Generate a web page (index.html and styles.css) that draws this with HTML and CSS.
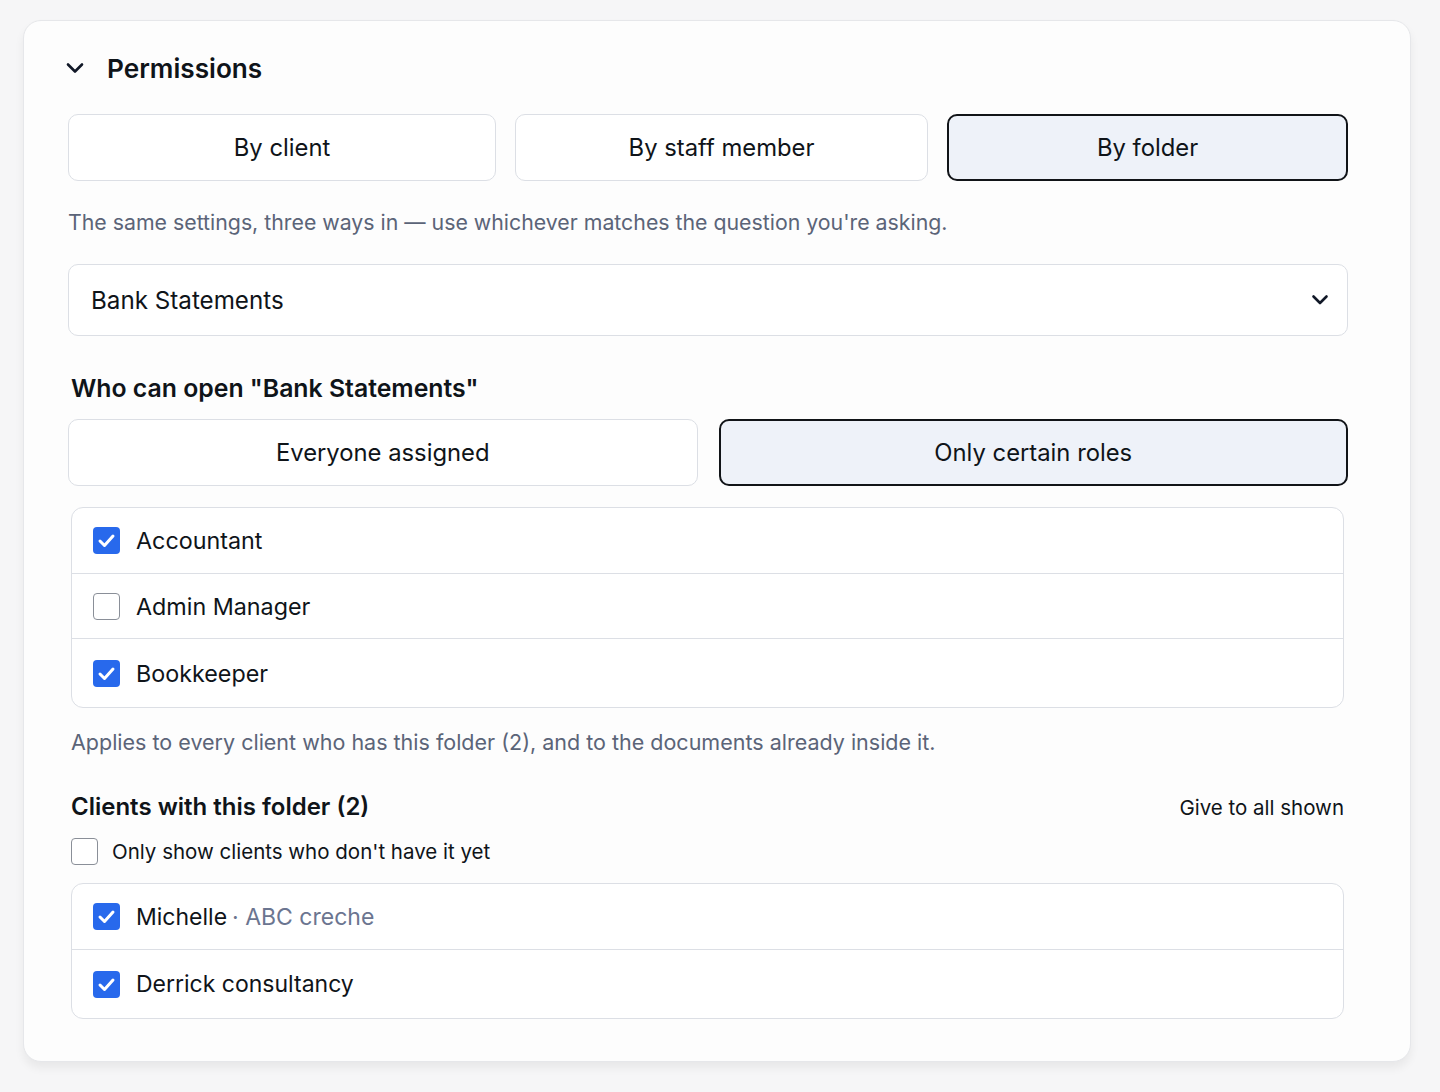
FILE: index.html
```html
<!DOCTYPE html>
<html lang="en">
<head>
  <meta charset="UTF-8">
  <meta name="viewport" content="width=device-width, initial-scale=1.0">
  <title>Permissions</title>
  <link rel="stylesheet" href="styles.css">
</head>
<body>
  <div class="card">
    <div class="card-head">
      <svg class="chev" width="18" height="12" viewBox="0 0 18 12"><path d="M2 2.5 L9 9.5 L16 2.5" fill="none" stroke="#111827" stroke-width="2.6" stroke-linecap="round" stroke-linejoin="round"/></svg>
      <h2>Permissions</h2>
    </div>

    <div class="tabs">
      <button class="seg">By client</button>
      <button class="seg">By staff member</button>
      <button class="seg active">By folder</button>
    </div>

    <p class="hint first">The same settings, three ways in — use whichever matches the question you're asking.</p>

    <div class="select">
      <span>Bank Statements</span>
      <svg width="18" height="12" viewBox="0 0 18 12"><path d="M2.5 2.5 L9 9 L15.5 2.5" fill="none" stroke="#111827" stroke-width="2.6" stroke-linecap="round" stroke-linejoin="round"/></svg>
    </div>

    <h3 class="label">Who can open "Bank Statements"</h3>

    <div class="toggle">
      <button class="seg">Everyone assigned</button>
      <button class="seg active">Only certain roles</button>
    </div>

    <ul class="list roles">
      <li><span class="box on"></span>Accountant</li>
      <li><span class="box"></span>Admin Manager</li>
      <li><span class="box on"></span>Bookkeeper</li>
    </ul>

    <p class="hint applies">Applies to every client who has this folder (2), and to the documents already inside it.</p>

    <div class="clients-head">
      <h3 class="label">Clients with this folder (2)</h3>
      <a class="give">Give to all shown</a>
    </div>

    <label class="filter"><span class="box"></span>Only show clients who don't have it yet</label>

    <ul class="list clients">
      <li><span class="box on"></span>Michelle <span class="org">· ABC creche</span></li>
      <li class="tall"><span class="box on"></span>Derrick consultancy</li>
    </ul>
  </div>
</body>
</html>
```

FILE: styles.css
```css
* { box-sizing: border-box; }
body { margin: 0; padding: 20px 29px 30px 23px; background: #f6f6f7; font-family: Inter, "Noto Sans", sans-serif; color: #0f1419; }

.card { background: #fdfdfd; border: 1px solid #e6e7ea; border-radius: 18px; padding: 29px 62px 42px 44px; box-shadow: 0 6px 10px rgba(0,0,0,0.06); }

.card-head { display: flex; align-items: center; height: 36px; }
.chev { margin-left: -2px; margin-right: 23px; }
.card-head h2 { margin: 0; font-size: 26.2px; font-weight: 600; }

button { font-family: inherit; }
.seg { height: 67px; background: #fff; border: 1.5px solid #dcdfe5; border-radius: 10px; font-size: 23.8px; color: #0f1419; cursor: pointer; }
.seg.active { background: #eef2f9; border: 2px solid #111418; }

.tabs { display: grid; grid-template-columns: 428fr 413fr 401fr; column-gap: 19px; margin-top: 28px; }
.toggle { display: grid; grid-template-columns: 1fr 1fr; column-gap: 21px; margin-top: 15px; }

.hint { margin: 0; font-size: 21.3px; line-height: 30px; color: #5b6478; }
.hint.first { margin-top: 26px; }
.hint.applies { margin-top: 19px; margin-left: 3px; font-size: 21.5px; }

.select { display: flex; align-items: center; justify-content: space-between; height: 72px; margin-top: 27px; padding: 0 18px 0 22px; background: #fff; border: 1.5px solid #dcdfe5; border-radius: 10px; font-size: 24.2px; }

.label { margin: 0; font-size: 24px; line-height: 32px; font-weight: 600; }
.select + .label { margin-top: 36px; margin-left: 3px; font-size: 24.8px; }

.list { list-style: none; margin: 21px 4px 0 3px; padding: 0; background: #fff; border: 1.5px solid #dcdfe5; border-radius: 12px; }
.list li { display: flex; align-items: center; height: 65px; padding-left: 21px; font-size: 23.3px; border-top: 1.5px solid #dcdfe5; }
.list li:first-child { border-top: none; }
.roles li:last-child { height: 69px; }
.list li.tall { height: 69px; }
.org { color: #6b7590; margin-left: 5px; }
.clients li { font-size: 23px; }

.box { width: 27px; height: 27px; border: 1.5px solid #8a8f98; border-radius: 4px; margin-right: 16px; background: #fff; flex: none; }
.box.on { border: none; background: #2869ec url("data:image/svg+xml,%3Csvg xmlns='http://www.w3.org/2000/svg' viewBox='0 0 27 27'%3E%3Cpath d='M7 14 L11.5 18.5 L20 9' fill='none' stroke='white' stroke-width='3' stroke-linecap='round' stroke-linejoin='round'/%3E%3C/svg%3E") no-repeat center / 27px 27px; }

.clients-head { display: flex; justify-content: space-between; align-items: center; margin: 34px 4px 0 3px; }
.give { font-size: 20.5px; color: #0f1419; cursor: pointer; }

.filter { display: flex; align-items: center; margin: 15px 0 0 3px; font-size: 20.5px; line-height: 27px; }
.filter .box { margin-right: 14px; }

.clients { margin-top: 18px; }
```
